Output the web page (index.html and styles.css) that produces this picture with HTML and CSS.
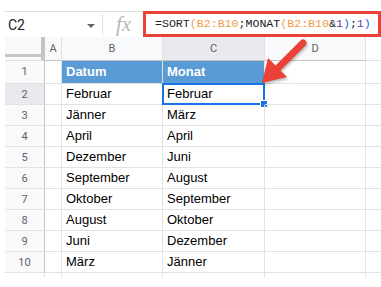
FILE: index.html
```html
<!DOCTYPE html>
<html lang="de">
<head>
  <meta charset="UTF-8">
  <title>SORT nach Monat</title>
  <link rel="stylesheet" href="styles.css">
</head>
<body>
  <div class="sheet">
    <div class="formula-bar">
      <div class="name-box">
        <span class="cell-ref">C2</span>
        <span class="caret"></span>
      </div>
      <div class="fx">fx</div>
      <div class="formula"><span class="fn">=SORT</span><span class="paren">(</span><span class="rng">B2:B10</span><span class="fn">;MONAT</span><span class="paren">(</span><span class="rng">B2:B10</span><span class="fn">&amp;</span><span class="num">1</span><span class="close">)</span><span class="fn">;</span><span class="num">1</span><span class="close">)</span></div>
    </div>

    <div class="grid">
      <div class="corner"></div>
      <div class="col-head">A</div>
      <div class="col-head">B</div>
      <div class="col-head active">C</div>
      <div class="col-head">D</div>
      <div class="col-rest"></div>

      <div class="row-head">1</div><div class="cell"></div><div class="cell title">Datum</div><div class="cell title">Monat</div><div class="cell"></div><div class="col-rest"></div>
      <div class="row-head active">2</div><div class="cell"></div><div class="cell">Februar</div><div class="cell selected">Februar<span class="handle"></span></div><div class="cell"></div><div class="col-rest"></div>
      <div class="row-head">3</div><div class="cell"></div><div class="cell">Jänner</div><div class="cell">März</div><div class="cell"></div><div class="col-rest"></div>
      <div class="row-head">4</div><div class="cell"></div><div class="cell">April</div><div class="cell">April</div><div class="cell"></div><div class="col-rest"></div>
      <div class="row-head">5</div><div class="cell"></div><div class="cell">Dezember</div><div class="cell">Juni</div><div class="cell"></div><div class="col-rest"></div>
      <div class="row-head">6</div><div class="cell"></div><div class="cell">September</div><div class="cell">August</div><div class="cell"></div><div class="col-rest"></div>
      <div class="row-head">7</div><div class="cell"></div><div class="cell">Oktober</div><div class="cell">September</div><div class="cell"></div><div class="col-rest"></div>
      <div class="row-head">8</div><div class="cell"></div><div class="cell">August</div><div class="cell">Oktober</div><div class="cell"></div><div class="col-rest"></div>
      <div class="row-head">9</div><div class="cell"></div><div class="cell">Juni</div><div class="cell">Dezember</div><div class="cell"></div><div class="col-rest"></div>
      <div class="row-head">10</div><div class="cell"></div><div class="cell">März</div><div class="cell">Jänner</div><div class="cell"></div><div class="col-rest"></div>

      <div class="stub"></div><div class="stub"></div><div class="stub"></div><div class="stub"></div><div class="stub"></div><div class="stub end"></div>
    </div>

    <svg class="arrow" width="381" height="287" viewBox="0 0 381 287">
      <line x1="303" y1="43" x2="277" y2="69" stroke="#ea4138" stroke-width="7" stroke-linecap="round"/>
      <polygon points="262,83 268,58 287,77" fill="#ea4138"/>
    </svg>
  </div>
</body>
</html>
```

FILE: styles.css
```css
body {
  margin: 0;
  background: #fff;
  font-family: "Liberation Sans", Arial, sans-serif;
}
.sheet {
  position: relative;
  width: 381px;
  height: 287px;
  padding: 11px 0 0 5px;
  box-sizing: border-box;
}
.formula-bar {
  display: flex;
  height: 25px;
  border-top: 1px solid #e0e0e0;
}
.name-box {
  width: 98px;
  display: flex;
  align-items: center;
  justify-content: space-between;
  padding: 0 7px 0 3px;
  box-sizing: border-box;
  border-right: 1px solid #e0e0e0;
  margin: 2px 0;
}
.cell-ref {
  font-family: Roboto, "Liberation Sans", sans-serif;
  font-size: 14px;
  color: #202124;
}
.caret {
  width: 0;
  height: 0;
  border-left: 4px solid transparent;
  border-right: 4px solid transparent;
  border-top: 4px solid #5f6368;
  margin-top: 2px;
}
.fx {
  width: 39px;
  font-family: "Liberation Serif", serif;
  font-style: italic;
  font-size: 21px;
  color: #b7b7b7;
  text-align: center;
  line-height: 24px;
  margin-left: 1px;
}
.formula {
  flex: 1;
  border: 3px solid #ea4138;
  margin-top: -1px;
  padding-left: 9px;
  font-family: "Liberation Mono", monospace;
  font-size: 11.6px;
  line-height: 20px;
  color: #202124;
  white-space: nowrap;
}
.formula .rng { color: #f29b45; }
.formula .paren { color: #f29b45; }
.formula .num { color: #5c3fa8; }
.formula .close { color: #1967d2; }

.grid {
  display: grid;
  grid-template-columns: 40px 17px 101px 102px 101px 15px;
  grid-template-rows: 24px 23px repeat(9, 21px) 4px;
}
.grid > div {
  box-sizing: border-box;
  border-right: 1px solid #e2e2e2;
  border-bottom: 1px solid #e2e2e2;
}
.corner {
  background: linear-gradient(to bottom, #f8f9fa 0 17px, #c4c4c4 17px 20px, #f8f9fa 20px);
  border-right: 4px solid #c4c4c4 !important;
}
.col-head {
  background: #f8f9fa;
  border-bottom-color: #c4c4c4 !important;
  font-family: Roboto, "Liberation Sans", sans-serif;
  font-size: 11px;
  color: #5f6368;
  text-align: center;
  line-height: 23px;
}
.col-head.active,
.row-head.active {
  background: #e8eaed;
}
.col-rest {
  background: #fff;
  border-right: none !important;
}
.row-head {
  background: #f8f9fa;
  border-right-color: #c4c4c4 !important;
  font-family: Roboto, "Liberation Sans", sans-serif;
  font-size: 11px;
  color: #5f6368;
  text-align: center;
  line-height: 21px;
}
.cell {
  position: relative;
  font-size: 13px;
  color: #000;
  padding-left: 4px;
  line-height: 20px;
  white-space: nowrap;
}
.cell.title {
  background: #5b9bd5;
  color: #fff;
  font-weight: bold;
  line-height: 22px;
}
.cell.selected {
  border: 2px solid #1a73e8 !important;
  margin: -1px 0 0 -1px;
  padding-left: 3px;
  line-height: 18px;
}
.handle {
  position: absolute;
  right: -5px;
  bottom: -5px;
  width: 6px;
  height: 6px;
  background: #1a73e8;
  border: 1px solid #fff;
}
.stub {
  border-bottom: none !important;
}
.stub.end {
  border-right: none !important;
}
.arrow {
  position: absolute;
  left: 0;
  top: 0;
  filter: drop-shadow(1px 2px 1px rgba(0, 0, 0, 0.25));
}
```
